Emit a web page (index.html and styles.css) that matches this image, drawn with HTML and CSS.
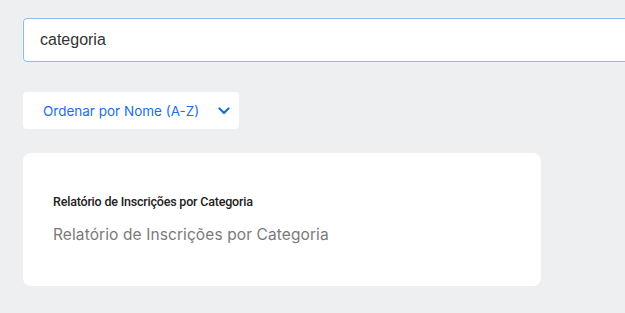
FILE: index.html
```html
<!DOCTYPE html>
<html lang="pt">

<head>
  <meta charset="UTF-8" />
  <title>Relatórios</title>
  <link rel="stylesheet" href="styles.css">
</head>

<body>
  <div class="page">
    <div class="search">
      <input class="search-input" type="text" value="categoria" />
    </div>

    <div class="sort">
      <span class="sort-label">Ordenar por Nome (A-Z)</span>
      <svg class="sort-chevron" width="12" height="8" viewBox="0 0 12 8">
        <path d="M1.5 1.5 L6 6 L10.5 1.5" fill="none" stroke="#1a6fe8" stroke-width="2.2" stroke-linecap="round" stroke-linejoin="round" />
      </svg>
    </div>

    <div class="card">
      <div class="card-title">Relatório de Inscrições por Categoria</div>
      <div class="card-desc">Relatório de Inscrições por Categoria</div>
    </div>
  </div>
</body>

</html>
```

FILE: styles.css
```css
* {
  padding: 0;
  margin: 0;
  box-sizing: border-box;
}

body {
  background: #eeeff1;
  overflow: hidden;
  font-family: Inter, "Noto Sans", sans-serif;
}

.page {
  padding: 18px 0 0 23px;
  display: flex;
  flex-direction: column;
  align-items: flex-start;
  overflow: hidden;
}

.search {
  width: 640px;
}

.search-input {
  display: block;
  width: 100%;
  height: 44px;
  padding: 0 16px;
  border: 1px solid #8bbcf7;
  border-radius: 4px;
  background: #fff;
  font-family: "Liberation Sans", Arial, sans-serif;
  font-size: 16px;
  color: #333;
  outline: none;
}

.sort {
  margin-top: 30px;
  width: 216px;
  height: 37px;
  padding: 0 8px 0 20px;
  background: #fff;
  border-radius: 4px;
  display: flex;
  align-items: center;
  justify-content: space-between;
}

.sort-label {
  font-size: 13.5px;
  color: #1a6fe8;
}

.sort-chevron {
  margin-right: 1px;
}

.card {
  margin-top: 24px;
  width: 518px;
  height: 133px;
  background: #fff;
  border-radius: 8px;
  padding: 41px 30px 0;
}

.card-title {
  font-family: Roboto, sans-serif;
  font-size: 12.5px;
  font-weight: 500;
  letter-spacing: -0.2px;
  color: #222;
}

.card-desc {
  margin-top: 16px;
  font-size: 15.5px;
  letter-spacing: 0.1px;
  color: #7a7a7a;
}
```
